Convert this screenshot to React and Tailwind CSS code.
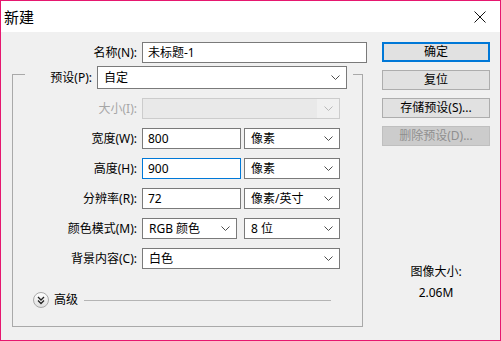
import React from "react";

const Chevron = ({ muted }) => (
  <svg width="9" height="5" viewBox="0 0 9 5" className="shrink-0">
    <polyline
      points="0.5,0.5 4.5,4.5 8.5,0.5"
      fill="none"
      stroke={muted ? "#b8b8b8" : "#4d4d4d"}
      strokeWidth="1"
    />
  </svg>
);

const Select = ({ value, className = "" }) => (
  <div
    className={`flex h-[21px] items-center justify-between border border-[#7a7a7a] bg-white pl-[6px] pr-[6px] ${className}`}
  >
    <span>{value}</span>
    <Chevron />
  </div>
);

const Input = ({ value, focused, className = "" }) => (
  <div
    className={`flex h-[21px] items-center border bg-white pl-[5px] ${
      focused ? "border-[#0078d7]" : "border-[#7a7a7a]"
    } ${className}`}
  >
    {value}
  </div>
);

const Row = ({ label, disabled, children }) => (
  <div className="flex items-center gap-[5px]">
    <div
      className={`w-[124px] text-right ${
        disabled ? "text-[#a6a6a6]" : "text-black"
      }`}
    >
      {label}
    </div>
    {children}
  </div>
);

const Button = ({ label, primary, disabled }) => (
  <div
    className={`flex h-[20px] items-center justify-center ${
      primary
        ? "border-2 border-[#0078d7] bg-[#e1e1e1]"
        : disabled
        ? "border border-[#bfbfbf] bg-[#cccccc] text-[#8f8f8f]"
        : "border border-[#adadad] bg-[#e1e1e1]"
    }`}
  >
    {label}
  </div>
);

const App = () => {
  return (
    <div className="flex h-[341px] w-[501px] flex-col border border-[#e6176f] font-['Noto_Sans','Noto_Sans_CJK_SC',sans-serif] text-[12px] leading-[16px] text-black">
      {/* title bar */}
      <div className="flex h-[31px] shrink-0 items-center justify-between bg-white pl-[3px] pr-[14px]">
        <span className="text-[15px] leading-[18px]">新建</span>
        <svg width="12" height="12" viewBox="0 0 12 12">
          <path d="M0.5 0.5 L11.5 11.5 M11.5 0.5 L0.5 11.5" stroke="#111" strokeWidth="1" />
        </svg>
      </div>

      <div className="flex flex-1 bg-[#f0f0f0] pt-[10px]">
        {/* form column */}
        <div className="w-[366px] shrink-0">
          <div className="flex items-center gap-[5px]">
            <div className="w-[136px] text-right">名称(N):</div>
            <Input value="未标题-1" className="w-[225px]" />
          </div>

          <div className="ml-[11px] mt-[11px] flex h-[253px] w-[351px] flex-col gap-[9px] border border-[#a9a9a9]">
            <div className="-mt-[9px] ml-[12px] flex w-[328px] items-center bg-[#f0f0f0] pr-[6px]">
              <div className="w-[67px] text-right">预设(P):</div>
              <Select value="自定" className="ml-[5px] h-[23px] w-[250px]" />
            </div>

            <Row label="大小(I):" disabled>
              <div className="flex h-[21px] w-[198px] items-center border border-[#cccccc] bg-[#f0f0f0]">
                <div className="h-full flex-1 bg-[#e9e9e9]" />
                <div className="flex w-[22px] justify-center">
                  <Chevron muted />
                </div>
              </div>
            </Row>

            <Row label="宽度(W):">
              <Input value="800" className="w-[99px]" />
              <Select value="像素" className="ml-[-2px] w-[96px]" />
            </Row>

            <Row label="高度(H):">
              <Input value="900" focused className="w-[99px]" />
              <Select value="像素" className="ml-[-2px] w-[96px]" />
            </Row>

            <Row label="分辨率(R):">
              <Input value="72" className="w-[99px]" />
              <Select value="像素/英寸" className="ml-[-2px] w-[96px]" />
            </Row>

            <Row label="颜色模式(M):">
              <Select value="RGB 颜色" className="w-[95px]" />
              <Select value="8 位" className="ml-[2px] w-[96px]" />
            </Row>

            <Row label="背景内容(C):">
              <Select value="白色" className="w-[198px]" />
            </Row>

            <div className="ml-[20px] mt-[14px] flex items-center">
              <svg width="16" height="16" viewBox="0 0 16 16" className="shrink-0">
                <defs>
                  <linearGradient id="adv" x1="0" y1="0" x2="0" y2="1">
                    <stop offset="0" stopColor="#ffffff" />
                    <stop offset="1" stopColor="#dedede" />
                  </linearGradient>
                </defs>
                <circle cx="8" cy="8" r="7.5" fill="url(#adv)" stroke="#a8a8a8" />
                <polyline points="5,5 8,8 11,5" fill="none" stroke="#222" strokeWidth="1.3" />
                <polyline points="5,8.5 8,11.5 11,8.5" fill="none" stroke="#222" strokeWidth="1.3" />
              </svg>
              <span className="ml-[5px] w-[24px]">高级</span>
              <div className="ml-[6px] h-px w-[247px] bg-[#b4b4b4]" />
            </div>
          </div>
        </div>

        {/* buttons column */}
        <div className="ml-[15px] flex w-[108px] flex-col">
          <div className="flex flex-col gap-[8px]">
            <Button label="确定" primary />
            <Button label="复位" />
            <Button label="存储预设(S)..." />
            <Button label="删除预设(D)..." disabled />
          </div>
          <div className="mt-[118px] text-center">图像大小:</div>
          <div className="mt-[5px] text-center">2.06M</div>
        </div>
      </div>
    </div>
  );
};

export default App;
